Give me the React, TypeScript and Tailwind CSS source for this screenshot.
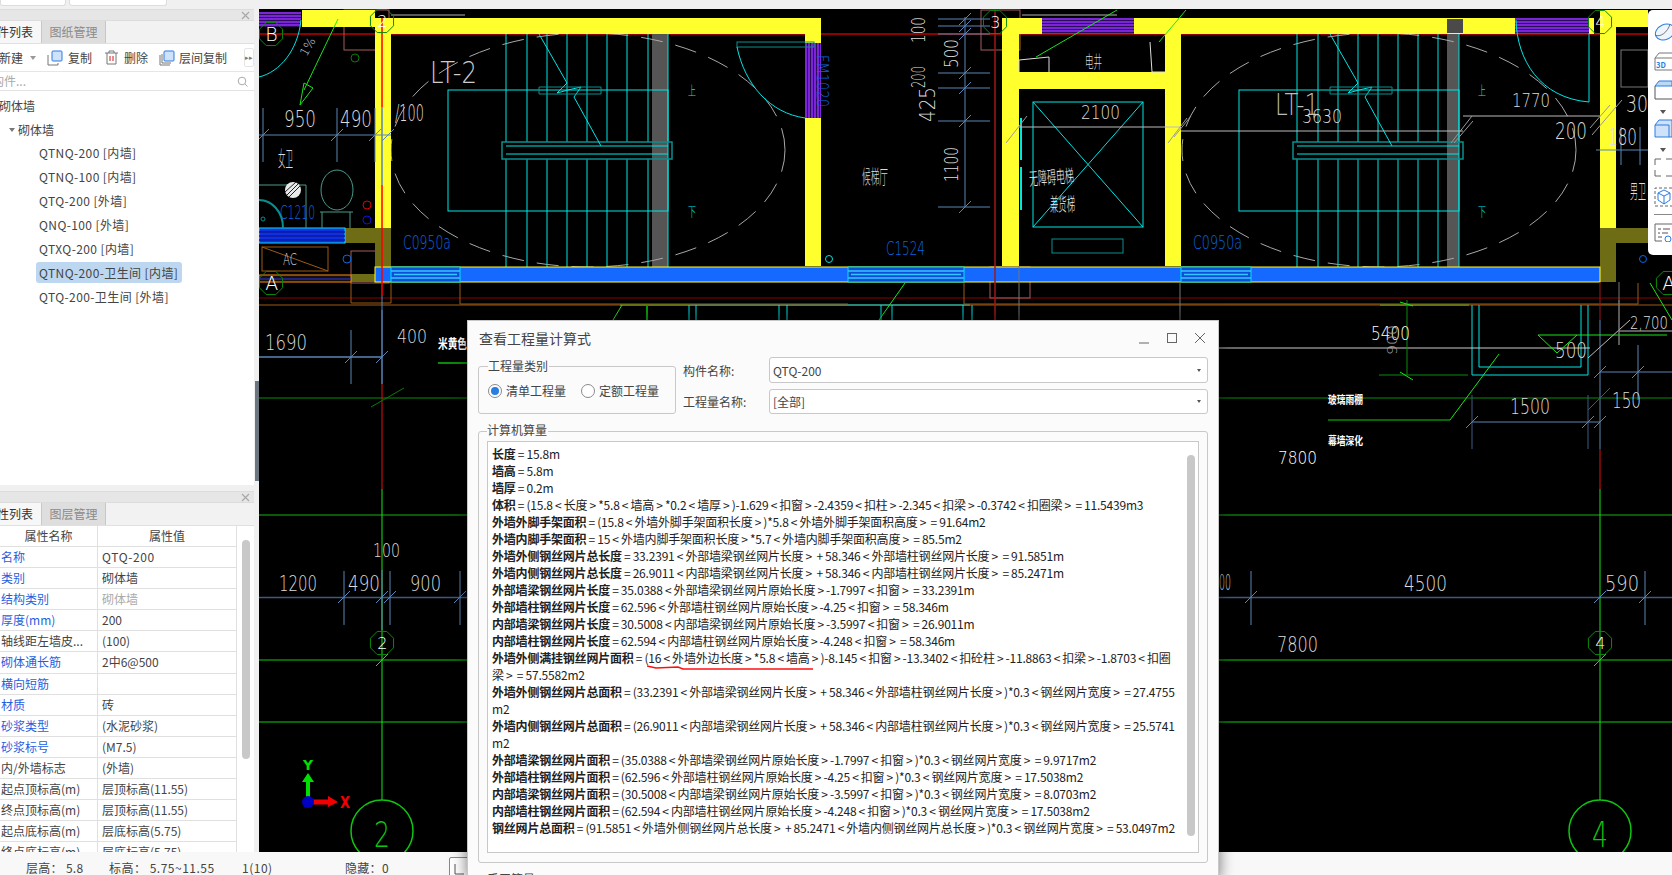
import type { ReactNode } from "react";

// ─── CAD canvas helpers (viewBox uses page coordinates) ──────────────────────

const CY = "#00e5e5";
const TEAL = "#0a8f8f";
const BLUE = "#0a66e0";
const DIM = "#5a86b8";
const DIM2 = "#3c5a80";
const GRN = "#0a8a0a";
const LIME = "#19e619";
const WALL = "#ffff2e";
const OLIVE = "#6e6c14";
const WBLUE = "#1569ff";
const PINK = "#a85a5a";
const BROWN = "#a05a14";

type TP = { x: number; y: number; w?: number; s?: number; c?: string; t: string; rot?: number; b?: boolean };

function T({ x, y, w, s = 20, c = "#dcdcdc", t, rot, b }: TP) {
  return (
    <text
      x={x}
      y={y}
      fontSize={s}
      fill={c}
      fontWeight={b ? 700 : 200}
      dominantBaseline="central"
      textLength={w}
      lengthAdjust={w ? "spacingAndGlyphs" : undefined}
      transform={rot ? `rotate(${rot} ${x} ${y})` : undefined}
    >
      {t}
    </text>
  );
}

function L({ d, c = DIM, w = 1 }: { d: string; c?: string; w?: number }) {
  return <path d={d} stroke={c} strokeWidth={w} fill="none" />;
}

function Bubble({ x, y, t, size = 16 }: { x: number; y: number; t: string; size?: number }) {
  const pts = Array.from({ length: 8 }, (_, i) => {
    const a = (Math.PI / 4) * i + Math.PI / 8;
    return `${x + 12.5 * Math.cos(a)},${y + 12.5 * Math.sin(a)}`;
  }).join(" ");
  return (
    <g>
      <polygon points={pts} fill="none" stroke={GRN} />
      <T x={x - size * 0.3} y={y} s={size} c="#fff" t={t} />
    </g>
  );
}

function Tick({ x, y, c = DIM }: { x: number; y: number; c?: string }) {
  return <L d={`M${x - 6} ${y + 6}L${x + 6} ${y - 6}`} c={c} />;
}

function Window({ x, w }: { x: number; w: number }) {
  return (
    <g>
      <rect x={x} y={267} width={w} height={15} fill="#0f4fd8" stroke={CY} />
      <L d={`M${x} 271H${x + w}M${x + 3} 274.500H${x + w - 3}M${x} 278H${x + w}`} c="#34c5ff" w={1.500} />
    </g>
  );
}

function Purple({ x, y, w, h, vertical }: { x: number; y: number; w: number; h: number; vertical?: boolean }) {
  const n = vertical ? Math.floor(w / 3) : Math.floor(h / 3);
  return (
    <g>
      <rect x={x} y={y} width={w} height={h} fill="#7c25d8" />
      {Array.from({ length: n }, (_, i) =>
        vertical ? (
          <rect key={i} x={x + i * 3 + 2} y={y} width={1} height={h} fill="#2c0e58" />
        ) : (
          <rect key={i} x={x} y={y + i * 3 + 2} width={w} height={1} fill="#2c0e58" />
        )
      )}
    </g>
  );
}

function Stair({ xs, left, cx, band, land }: { xs: number[]; left: number; cx: number; band: number; land: [number, number] }) {
  const right = xs[xs.length - 1];
  return (
    <g>
      <rect x={band} y={34} width={right - band} height={233} fill="#555" />
      <ellipse cx={cx} cy={150} rx={197} ry={117} fill="none" stroke="#a8a8a8" strokeDasharray="22 13" />
      <rect x={left} y={90} width={right - left} height={121} fill="none" stroke={CY} />
      {xs.map((x) => (
        <L key={x} d={`M${x} 34V142M${x} 159V267`} c={CY} />
      ))}
      <rect x={land[0]} y={142} width={land[1] - land[0]} height={17} fill="none" stroke={TEAL} strokeWidth={1.500} />
      <L d={`M${xs[0]} 146H${right}M${xs[0]} 154H${right}`} c={CY} />
    </g>
  );
}

// ─── The drawing ─────────────────────────────────────────────────────────────

function CadDrawing() {
  return (
    <svg
      width={1413}
      height={843}
      viewBox="259 9 1413 843"
      className="block font-['DejaVu_Sans','Noto_Sans_CJK_SC',sans-serif]"
    >
      <rect x={259} y={9} width={1413} height={843} fill="#000" />

      {/* long horizontals */}
      <L d="M259 34H1672" c="#c00000" w={1.500} />
      <L d="M259 298H1672" c="#8a0000" />
      <L d="M259 305H1672" c={BROWN} />
      <L d="M620 305H690" c={LIME} />
      <L d="M690 305H970" c={CY} />
      <L d="M1380 305H1469" c={LIME} />
      <L d="M259 398H1672" c={GRN} />
      <L d="M259 515H1672" c="#0a5a0a" w={2} />
      <L d="M259 660H1672" c={GRN} w={1.500} />
      <L d="M259 722H1672" c={GRN} w={1.500} />
      <L d="M259 597.500H1672" c={DIM2} w={1.500} />

      {/* brown and pink outlines */}
      <path d="M351 283V303H391V283M460 283V304H848M964 283V304H1638V283" stroke={BROWN} fill="none" />
      <rect x={344} y={10} width={45} height={40} fill="none" stroke={PINK} />
      <rect x={351} y={251} width={38} height={32} fill="none" stroke={PINK} />
      <rect x={981} y={10} width={39} height={40} fill="none" stroke={PINK} />
      <rect x={990} y={267} width={40} height={31} fill="none" stroke={PINK} />

      {/* stairs */}
      <Stair xs={[506, 527, 547, 567, 587, 607, 627, 648, 668]} left={448} cx={588} band={652} land={[502, 672]} />
      <Stair xs={[1297, 1318, 1338, 1358, 1378, 1398, 1418, 1438, 1459]} left={1239} cx={1379} band={1447} land={[1293, 1463]} />
      {[0, 791].map((dx) => (
        <g key={dx}>
          <L d={`M${539 + dx} 34L${567 + dx} 83L${557 + dx} 93L${568 + dx} 90L${581 + dx} 87L${574 + dx} 97L${601 + dx} 146`} c={CY} />
          <path d={`M${539 + dx} 87H${601 + dx}V94H${539 + dx}Z`} stroke={TEAL} fill="none" />
        </g>
      ))}

      {/* yellow walls */}
      <rect x={302} y={10} width={73} height={17} fill={WALL} />
      <rect x={391} y={18} width={430} height={16} fill={WALL} />
      <rect x={375} y={18} width={16} height={210} fill={WALL} />
      <rect x={805} y={34} width={16} height={232} fill={WALL} />
      <rect x={1002} y={18} width={592} height={16} fill={WALL} />
      <rect x={1002} y={18} width={17} height={248} fill={WALL} />
      <rect x={1165} y={34} width={16} height={232} fill={WALL} />
      <rect x={1019} y={72} width={146} height={17} fill={WALL} />
      <rect x={1600} y={10} width={48} height={17} fill={WALL} />
      <rect x={1600} y={27} width={16} height={201} fill={WALL} />
      <rect x={1447} y={19} width={16} height={14} fill="#4a4a4a" />

      {/* olive columns */}
      <path d="M345 228H391V267H375V243H345Z" fill={OLIVE} />
      <rect x={375} y={243} width={16} height={24} fill={OLIVE} />
      <path d="M1600 228H1648V243H1616V282H1600Z" fill={OLIVE} />
      <rect x={351} y={274} width={24} height={8} fill={OLIVE} />

      {/* blue wall */}
      <rect x={375} y={267} width={1225} height={15} fill={WBLUE} stroke={WALL} />
      <Window x={391} w={69} />
      <Window x={848} w={116} />
      <Window x={1181} w={70} />

      {/* windows and doors */}
      <Purple x={259} y={12} w={42} h={15} />
      <Purple x={1042} y={18} w={92} h={16} />
      <Purple x={1515} y={18} w={74} h={16} />
      <Purple x={805} y={43} w={16} h={75} vertical />
      <rect x={259} y={228} width={86} height={15} fill="#1030e0" stroke={CY} />
      <L d="M259 232H345M259 236H345M259 240H345" c="#0818a0" w={1.500} />

      {/* door arcs */}
      <rect x={737} y={42} width={77} height={5} fill="none" stroke={TEAL} />
      <L d="M737 47C745 85 770 113 805 118" c={CY} />
      <L d="M259 77C280 72 298 50 301 20" c={CY} />
      <L d="M1516 20C1517 60 1540 98 1589 102V33" c={CY} />

      {/* left bathroom */}
      <rect x={262} y={247} width={66} height={24} fill="none" stroke={BROWN} />
      <L d="M262 247L328 271" c={BROWN} />
      <rect x={259} y={275} width={92} height={7} fill="#1a1000" stroke="#ff8a10" />
      <L d="M259 279H351" c="#2030ff" />
      <ellipse cx={337} cy={190} rx={16} ry={20} fill="none" stroke="#4a9a8a" />
      <L d="M320 212H353M322 212V228M350 212V228" c="#4a9a8a" />
      <L d="M259 185H306V228" c="#4a9a8a" />
      <path d="M259 200C272 200 283 212 283 228" stroke={TEAL} fill="none" strokeWidth={2} />
      <circle cx={293} cy={190} r={8} fill="#e8e8e8" />
      <L d="M287 195L298 184M289 197L300 186M285 192L296 182" c="#222" />
      <circle cx={367} cy={205} r={4} fill="none" stroke="#e00000" />
      <circle cx={367} cy={220} r={4} fill="none" stroke="#1010e0" />
      <circle cx={355} cy={58} r={4} fill="none" stroke="#0a7a0a" />
      <circle cx={347} cy={259} r={4} fill="none" stroke={BLUE} />
      <circle cx={829} cy={259} r={3.500} fill="none" stroke={CY} />
      <circle cx={1643} cy={259} r={3.500} fill="none" stroke={BLUE} />
      <circle cx={263} cy={219} r={2} fill="none" stroke={TEAL} />
      <L d="M338 19L304 90M300 105L304 83L313 88Z" c={LIME} />

      {/* verticals */}
      <L d="M382 18V107M382 185V295" c="#ff0000" w={1.500} />
      <L d="M382 107V185" c={DIM} w={1.500} />
      <L d="M382 295V384" c={DIM} />
      <L d="M382 384V489" c="#e01010" />
      <L d="M382 489V800" c={LIME} />
      <L d="M382 570V630" c={DIM} />
      <L d="M995 9V320" c="#a01818" w={1.500} />
      <L d="M1600 282V320" c="#a01818" />
      <L d="M1600 320V449" c={DIM} />
      <L d="M1600 449V489" c="#e01010" />
      <L d="M1600 489V800" c={LIME} />
      <L d="M1019 266V320M1180 282V320M1619 282V345" c="#777" />
      <L d="M391 15H465M1022 15H1117" c="#777" w={1.500} />
      <L d="M689 305V320M696 305V320M779 305V320M787 305V320M881 305V320M892 305V320M963 305V320M972 305V320M1472 305V375M1479 305V367H1581V305M1588 305V375H1472" c={CY} />
      <L d="M613 320L622 305M879 320L905 283M1650 283L1672 320" c={LIME} />
      <L d="M647 305V320" c="#0a9a0a" w={2} />
      <L d="M1036 57L1117 10M1159 42L1186 10" c={LIME} />
      <L d="M1019 72V60L1049 57V72M1150 42L1152 72H1165" c="#ddd" />

      {/* elevator */}
      <rect x={1033} y={102} width={110} height={125} fill="none" stroke={CY} />
      <L d="M1033 102L1143 227M1143 102L1033 227" c={CY} />
      <rect x={1052} y={239} width={71} height={14} fill="none" stroke={TEAL} />
      <L d="M1021 118V160M1021 167V210" c={CY} w={2} />

      {/* dimensions top-left */}
      <L d="M259 135H391" c={DIM} />
      <L d="M263 108V162M337 108V162M375 108V162" c={DIM} />
      <Tick x={263} y={135} />
      <Tick x={337} y={135} />
      <Tick x={375} y={135} />
      <Tick x={388} y={135} />

      {/* dimensions around lift lobby */}
      <L d="M938 19H990M938 26H990M938 34H990M938 73H990M938 88H990M938 121H990M938 207H990" c={DIM} />
      <L d="M965 17V207" c={DIM} />
      {[19, 26, 34, 73, 88, 121, 207].map((y) => (
        <Tick key={y} x={965} y={y} />
      ))}
      <L d="M1019 127H1181M1181 131H1463M1463 116H1600" c="#bbb" />
      <L d="M1006 143L1027 116M1168 143L1187 118M1174 137L1191 116M1451 143L1472 116M1454 143L1473 121M1590 128L1610 105M1592 135L1622 100" c="#999" />
      <L d="M1596 150H1672" c={DIM} />
      <L d="M1621 127V165M1640 127V165" c={DIM} />
      <rect x={1621} y={50} width={27} height={37} fill="none" stroke="#777" />

      {/* lower left dims */}
      <L d="M259 357H382" c={DIM} w={1.500} />
      <L d="M351 330V384M382 310V384" c={DIM} />
      <Tick x={351} y={357} />
      <Tick x={382} y={357} />
      <L d="M438 363H467" c={GRN} w={2} />
      <L d="M371 407L404 388" c="#0a7a0a" />
      <L d="M344 571V625M390 571V625M460 571V625" c={DIM} />
      <Tick x={344} y={597} />
      <Tick x={382} y={597} />
      <Tick x={390} y={597} />
      <Tick x={460} y={597} />
      <Tick x={382} y={660} c={LIME} />
      <Bubble x={382} y={643} t="2" />

      {/* lower right */}
      <L d="M1219 348H1590" c="#ccc" />
      <L d="M1407 300V375M1379 375H1468" c={GRN} />
      <L d="M1400 302L1413 306M1400 372L1413 380" c={LIME} />
      <path d="M1538 335L1557 353L1577 335Z" stroke={LIME} fill="none" />
      <L d="M1577 335H1667" c={LIME} />
      <L d="M1588 358L1630 320M1619 331H1672" c="#bbb" />
      <L d="M1619 300V345" c="#777" />
      <L d="M1328 420H1450" c={GRN} w={1.500} />
      <L d="M1450 420L1499 354" c={LIME} />
      <L d="M1472 422H1600" c={DIM} />
      <L d="M1472 395V449M1588 395V449" c={DIM2} />
      <Tick x={1472} y={422} />
      <Tick x={1588} y={422} />
      <Tick x={1600} y={422} />
      <L d="M1588 410L1610 388" c={GRN} />
      <L d="M1600 372H1672M1638 345V400" c={DIM} />
      <Tick x={1600} y={372} />
      <Tick x={1638} y={372} />
      <L d="M1251 571V625M1645 571V625" c={DIM} />
      <Tick x={1251} y={597} />
      <Tick x={1600} y={597} />
      <Tick x={1645} y={597} />
      <Tick x={1600} y={660} c={LIME} />
      <Bubble x={1600} y={643} t="4" />

      {/* big axis circles */}
      <circle cx={382} cy={831} r={31} fill="none" stroke="#0fc60f" strokeWidth={1.500} />
      <circle cx={1600} cy={831} r={31} fill="none" stroke="#0fc60f" strokeWidth={1.500} />
      <T x={374} y={834} w={16} s={36} c="#0fc60f" t="2" />
      <T x={1592} y={834} w={16} s={36} c="#0fc60f" t="4" />

      {/* axis gizmo */}
      <path d="M306 802V782H302L308 773L314 782H310V802Z" fill="#00e000" />
      <path d="M308 799.500H328V796L338 802L328 807V804.500H308Z" fill="#f00000" />
      <circle cx={308} cy={802} r={6} fill="#0000c0" />
      <T x={303} y={765} w={10} s={14} c="#00e000" t="Y" b />
      <T x={340} y={802} w={10} s={16} c="#f00000" t="X" b />

      {/* grid bubbles top */}
      <Bubble x={271} y={34} t="B" size={19} />
      <Bubble x={271} y={283} t="A" size={19} />
      <Bubble x={382} y={21} t="2" />
      <Bubble x={995} y={22} t="3" />
      <Bubble x={1600} y={22} t="4" />
      <Bubble x={1668} y={283} t="A" size={19} />

      {/* labels */}
      <T x={284} y={119} w={32} s={23} t="950" />
      <T x={340} y={119} w={32} s={23} t="490" />
      <T x={395} y={113} w={29} s={23} t="/100" />
      <T x={430} y={72} w={47} s={30} c="#ccc" t="LT-2" />
      <T x={1275} y={104} w={44} s={30} c="#bbb" t="LT-1" />
      <T x={303} y={55} s={12} c="#ddd" t="1%" rot={-60} />
      <T x={278} y={159} w={15} s={21} t="女卫" />
      <T x={283} y={260} w={14} s={15} t="AC" />
      <T x={280} y={212} w={35} s={19} c={BLUE} t="C1210" />
      <T x={403} y={242} w={48} s={19} c={BLUE} t="C0950a" />
      <T x={1193} y={242} w={49} s={19} c={BLUE} t="C0950a" />
      <T x={886} y={248} w={39} s={19} c={BLUE} t="C1524" />
      <T x={822} y={55} w={52} s={16} c={BLUE} t="FM1020" rot={90} />
      <T x={688} y={90} w={8} s={13} c={CY} t="上" />
      <T x={688} y={211} w={8} s={13} c={CY} t="下" />
      <T x={1478} y={90} w={8} s={13} c={CY} t="上" />
      <T x={1478} y={211} w={8} s={13} c={CY} t="下" />
      <T x={1085} y={62} w={17} s={17} t="电井" />
      <T x={862} y={177} w={26} s={19} t="候梯厅" />
      <T x={1029} y={179} w={45} s={18} c="#eee" t="无障碍电梯" rot={-4} />
      <T x={1050} y={204} w={25} s={18} c="#eee" t="兼货梯" />
      <T x={1081} y={112} w={39} s={20} t="2100" />
      <T x={917.500} y={43} w={26} s={20} t="100" rot={-90} />
      <T x={917.500} y={88} w={22} s={20} t="200" rot={-90} />
      <T x={927} y={122} w={35} s={22} t="425" rot={-90} />
      <T x={950.500} y={68} w={29} s={20} t="500" rot={-90} />
      <T x={950.500} y={182} w={35} s={20} t="1100" rot={-90} />
      <T x={1302} y={116} w={40} s={20} t="3630" />
      <T x={1512} y={100} w={38} s={20} t="1770" />
      <T x={1555} y={131} w={32} s={23} t="200" />
      <T x={1608} y={137} w={29} s={23} t="180" />
      <T x={1626} y={104} w={22} s={23} t="30" />
      <T x={1630} y={192} w={16} s={20} t="男卫" />
      <T x={265} y={342} w={42} s={22} t="1690" />
      <T x={397} y={336} w={30} s={20} t="400" />
      <T x={438} y={343} w={29} s={13} c="#fff" t="米黄色" b />
      <T x={279} y={583} w={38} s={22} t="1200" />
      <T x={348} y={583} w={32} s={22} t="490" />
      <T x={410} y={583} w={31} s={22} t="900" />
      <T x={373} y={550} w={27} s={20} t="100" />
      <T x={1371} y={333} w={39} s={19} c="#fff" t="5400" />
      <T x={1392} y={355} w={30} s={14} c="#aaa" t="900" rot={-90} />
      <T x={1630} y={323} w={38} s={17} t="2,700" />
      <T x={1555} y={351} w={32} s={21} t="500" />
      <T x={1328} y={400} w={35} s={11} c="#fff" t="玻璃雨棚" b />
      <T x={1328} y={441} w={35} s={11} c="#fff" t="幕墙深化" b />
      <T x={1278} y={457} w={39} s={18} c="#fff" t="7800" />
      <T x={1510} y={407} w={40} s={21} t="1500" />
      <T x={1612} y={401} w={29} s={21} t="150" />
      <T x={1219} y={583} w={12} s={21} t="00" />
      <T x={1404} y={583} w={43} s={22} t="4500" />
      <T x={1605} y={583} w={34} s={22} t="590" />
      <T x={1277} y={645} w={41} s={21} t="7800" />
    </svg>
  );
}

// ─── Left panels ─────────────────────────────────────────────────────────────

const treeItems = [
  "QTNQ-200 [内墙]",
  "QTNQ-100 [内墙]",
  "QTQ-200 [外墙]",
  "QNQ-100 [外墙]",
  "QTXQ-200 [内墙]",
  "QTNQ-200-卫生间 [内墙]",
  "QTQ-200-卫生间 [外墙]",
];

const propRows: [string, string, boolean, boolean?][] = [
  ["名称", "QTQ-200", true],
  ["类别", "砌体墙", true],
  ["结构类别", "砌体墙", true, true],
  ["厚度(mm)", "200", true],
  ["轴线距左墙皮...", "(100)", false],
  ["砌体通长筋", "2中6@500", true],
  ["横向短筋", "", true],
  ["材质", "砖", true],
  ["砂浆类型", "(水泥砂浆)", true],
  ["砂浆标号", "(M7.5)", true],
  ["内/外墙标志", "(外墙)", false],
  ["起点顶标高(m)", "层顶标高(11.55)", false],
  ["终点顶标高(m)", "层顶标高(11.55)", false],
  ["起点底标高(m)", "层底标高(5.75)", false],
  ["终点底标高(m)", "层底标高(5.75)", false],
];

function PanelHead({ active, other }: { active: string; other: string }) {
  return (
    <>
      <div className="h-[12px] bg-[#e6e6e6] border-y border-[#dcdcdc] flex items-center justify-end pr-[4px] shrink-0">
        <svg width="9" height="9" viewBox="0 0 9 9">
          <path d="M1 1L8 8M8 1L1 8" stroke="#a8a8a8" strokeWidth="1.200" />
        </svg>
      </div>
      <div className="h-[23px] flex bg-[#f2f2f2] border-b border-[#e0e0e0] text-[12px] leading-[22px] shrink-0">
        <div className="w-[41px] overflow-hidden flex justify-end text-[#333] bg-[#f7f7f7] whitespace-nowrap pr-[8px]">
          {active}
        </div>
        <div className="w-[65px] bg-[#dedede] border-x border-[#c8c8c8] text-center text-[#8a8a8a]">{other}</div>
      </div>
    </>
  );
}

function CopyIcon({ stacked }: { stacked?: boolean }) {
  return (
    <svg width="16" height="16" viewBox="0 0 16 16">
      {stacked && <path d="M1 5V15H11" stroke="#777" fill="none" />}
      <path d={stacked ? "M3 4V13H12" : "M1 5V15H11V13"} stroke="#777" fill="none" />
      <rect x="5" y="1" width="10" height="10" rx="1" fill="#cfe2fa" stroke="#2a7de1" />
    </svg>
  );
}

function TrashIcon() {
  return (
    <svg width="13" height="15" viewBox="0 0 13 15">
      <path d="M0 3H13M4 3V1H9V3M2 3V14H11V3" stroke="#777" fill="none" />
      <path d="M5 6V11M8 6V11" stroke="#d01818" />
    </svg>
  );
}

function ListPanel() {
  return (
    <div className="h-[476px] bg-white flex flex-col overflow-hidden">
      <PanelHead active="构件列表" other="图纸管理" />
      <div className="h-[28px] flex items-center text-[12px] text-[#444] border-b border-[#e6e6e6] shrink-0 whitespace-nowrap">
        <span className="w-[26px] -ml-[1px] pt-[1px]">新建</span>
        <span className="ml-[6px] w-0 h-0 border-x-[3px] border-x-transparent border-t-[4px] border-t-[#999]" />
        <span className="ml-[11px]"><CopyIcon /></span>
        <span className="ml-[5px] pt-[1px]">复制</span>
        <span className="ml-[13px]"><TrashIcon /></span>
        <span className="ml-[6px] pt-[1px]">删除</span>
        <span className="ml-[11px]"><CopyIcon stacked /></span>
        <span className="ml-[4px] pt-[1px]">层间复制</span>
        <span className="ml-[17px] w-[10px] h-[19px] border border-[#e6e6e6] rounded-[2px] text-[7px] leading-[17px] text-center text-[#777]">
          ▸▸
        </span>
      </div>
      <div className="h-[19px] flex items-center justify-between border-b border-[#e2e2e2] text-[12px] text-[#aaa] pr-[6px] shrink-0">
        <span className="-ml-[8px]">构件...</span>
        <svg width="11" height="11" viewBox="0 0 11 11">
          <circle cx="5" cy="5" r="3.800" fill="none" stroke="#aaa" />
          <path d="M8 8L10.500 10.500" stroke="#aaa" />
        </svg>
      </div>
      <div className="pt-[3px] text-[12px] text-[#444] leading-[24px]">
        <div className="h-[24px] -ml-[1px] whitespace-nowrap">砌体墙</div>
        <div className="h-[23px] flex items-center">
          <span className="ml-[9px] w-0 h-0 border-x-[3.5px] border-x-transparent border-t-[4px] border-t-[#777]" />
          <span className="ml-[3px]">砌体墙</span>
        </div>
        {treeItems.map((t, i) => (
          <div key={t} className="h-[23.900px] flex items-center">
            <span className={`ml-[36px] pl-[3px] pr-[4px] h-[21px] leading-[21px] rounded-[3px] whitespace-nowrap tracking-[0.4px] ${i === 5 ? "bg-[#bdd7f0]" : ""}`}>
              {t}
            </span>
          </div>
        ))}
      </div>
    </div>
  );
}

function PropsPanel() {
  return (
    <div className="h-[361px] bg-white flex flex-col overflow-hidden mt-[6px]">
      <PanelHead active="属性列表" other="图层管理" />
      <div className="flex flex-1 min-h-0">
        <div className="flex-1 min-w-0 text-[12px]">
          <div className="flex h-[21px] leading-[20px] text-center text-[#444] border-b border-[#e0e0e0]">
            <div className="w-[98px] border-r border-[#e0e0e0]">属性名称</div>
            <div className="flex-1 border-r border-[#e0e0e0]">属性值</div>
          </div>
          {propRows.map(([k, v, blue, muted]) => (
            <div key={k} className="flex h-[21.100px] leading-[20px] border-b border-[#e0e0e0] whitespace-nowrap">
              <div className={`w-[98px] pl-[1px] border-r border-[#e0e0e0] ${blue ? "text-[#1f5fe0]" : "text-[#444]"}`}>{k}</div>
              <div className={`flex-1 pl-[4px] border-r border-[#e0e0e0] ${muted ? "text-[#aaa]" : "text-[#444]"} ${v.startsWith("QTQ") ? "tracking-[0.6px]" : ""}`}>{v}</div>
            </div>
          ))}
        </div>
        <div className="w-[17px] pt-[14px] pl-[5px] shrink-0">
          <div className="w-[8px] h-[219px] rounded-full bg-[#c8c8c8]" />
        </div>
      </div>
    </div>
  );
}

// ─── Dialog ──────────────────────────────────────────────────────────────────

const formulaLines: [string, string][] = [
  ["长度", "=15.8m"],
  ["墙高", "=5.8m"],
  ["墙厚", "=0.2m"],
  ["体积", "=(15.8<长度>*5.8<墙高>*0.2<墙厚>)-1.629<扣窗>-2.4359<扣柱>-2.345<扣梁>-0.3742<扣圈梁>=11.5439m3"],
  ["外墙外脚手架面积", "=(15.8<外墙外脚手架面积长度>)*5.8<外墙外脚手架面积高度>=91.64m2"],
  ["外墙内脚手架面积", "=15<外墙内脚手架面积长度>*5.7<外墙内脚手架面积高度>=85.5m2"],
  ["外墙外侧钢丝网片总长度", "=33.2391<外部墙梁钢丝网片长度>+58.346<外部墙柱钢丝网片长度>=91.5851m"],
  ["外墙内侧钢丝网片总长度", "=26.9011<内部墙梁钢丝网片长度>+58.346<内部墙柱钢丝网片长度>=85.2471m"],
  ["外部墙梁钢丝网片长度", "=35.0388<外部墙梁钢丝网片原始长度>-1.7997<扣窗>=33.2391m"],
  ["外部墙柱钢丝网片长度", "=62.596<外部墙柱钢丝网片原始长度>-4.25<扣窗>=58.346m"],
  ["内部墙梁钢丝网片长度", "=30.5008<内部墙梁钢丝网片原始长度>-3.5997<扣窗>=26.9011m"],
  ["内部墙柱钢丝网片长度", "=62.594<内部墙柱钢丝网片原始长度>-4.248<扣窗>=58.346m"],
  ["外墙外侧满挂钢丝网片面积", "=(16<外墙外边长度>*5.8<墙高>)-8.145<扣窗>-13.3402<扣砼柱>-11.8863<扣梁>-1.8703<扣圈"],
  ["", "梁>=57.5582m2"],
  ["外墙外侧钢丝网片总面积", "=(33.2391<外部墙梁钢丝网片长度>+58.346<外部墙柱钢丝网片长度>)*0.3<钢丝网片宽度>=27.4755"],
  ["", "m2"],
  ["外墙内侧钢丝网片总面积", "=(26.9011<内部墙梁钢丝网片长度>+58.346<内部墙柱钢丝网片长度>)*0.3<钢丝网片宽度>=25.5741"],
  ["", "m2"],
  ["外部墙梁钢丝网片面积", "=(35.0388<外部墙梁钢丝网片原始长度>-1.7997<扣窗>)*0.3<钢丝网片宽度>=9.9717m2"],
  ["外部墙柱钢丝网片面积", "=(62.596<外部墙柱钢丝网片原始长度>-4.25<扣窗>)*0.3<钢丝网片宽度>=17.5038m2"],
  ["内部墙梁钢丝网片面积", "=(30.5008<内部墙梁钢丝网片原始长度>-3.5997<扣窗>)*0.3<钢丝网片宽度>=8.0703m2"],
  ["内部墙柱钢丝网片面积", "=(62.594<内部墙柱钢丝网片原始长度>-4.248<扣窗>)*0.3<钢丝网片宽度>=17.5038m2"],
  ["钢丝网片总面积", "=(91.5851<外墙外侧钢丝网片总长度>+85.2471<外墙内侧钢丝网片总长度>)*0.3<钢丝网片宽度>=53.0497m2"],
];

// the symbols sit wide in the original font, so give them room
function Formula({ text }: { text: string }) {
  return (
    <>
      {text.split(/([<>=+])/).map((part, i) =>
        /^[<>=+]$/.test(part) ? (
          <span key={i} className="mx-[2.2px]">{part}</span>
        ) : (
          <span key={i}>{part}</span>
        )
      )}
    </>
  );
}

function Radio({ on, children }: { on?: boolean; children: ReactNode }) {
  return (
    <span className="flex items-center gap-[4px]">
      <span className="w-[14px] h-[14px] rounded-full border border-[#8a8a8a] bg-white flex items-center justify-center">
        {on && <span className="w-[8px] h-[8px] rounded-full bg-[#2a7de1]" />}
      </span>
      {children}
    </span>
  );
}

function SelectBox({ value, h }: { value: string; h: string }) {
  return (
    <div className={`w-[439px] ${h} bg-white border border-[#c8c8c8] rounded-[3px] flex items-center justify-between pl-[3px] pr-[6px]`}>
      <span className="pt-[1px]">{value}</span>
      <span className="w-0 h-0 border-x-[2.5px] border-x-transparent border-t-[3px] border-t-[#555]" />
    </div>
  );
}

function Dialog() {
  return (
    <div className="absolute left-[467px] top-[320px] w-[752px] h-[560px] bg-[#fbfbfb] border border-[#c8c8c8] shadow-[0_0_14px_rgba(0,0,0,0.55)] text-[12px] text-[#444] px-[10px]">
      <div className="h-[36px] flex items-center justify-between pb-[2px]">
        <span className="text-[14px] text-[#444] ml-[1px]">查看工程量计算式</span>
        <div className="flex items-center gap-[16px] mr-[2px]">
          <svg width="12" height="12" viewBox="0 0 12 12"><path d="M1 11H11" stroke="#666" /></svg>
          <svg width="12" height="12" viewBox="0 0 12 12"><rect x="1.500" y="1.500" width="9" height="9" fill="none" stroke="#666" /></svg>
          <svg width="12" height="12" viewBox="0 0 12 12"><path d="M1 1L11 11M11 1L1 11" stroke="#666" /></svg>
        </div>
      </div>

      <div className="flex">
        <div className="relative w-[198px] h-[48px] mt-[9px] border border-[#c8c8c8] rounded-[3px] flex gap-[15px] pl-[9px] pt-[15px] items-start">
          <span className="absolute left-[9px] -top-[9px] bg-[#fbfbfb] pr-[1px] leading-[16px]">工程量类别</span>
          <Radio on>清单工程量</Radio>
          <Radio>定额工程量</Radio>
        </div>
        <div className="ml-[7px] flex flex-col gap-[6px]">
          <div className="flex items-center">
            <span className="w-[86px] pt-[1px]">构件名称:</span>
            <SelectBox value="QTQ-200" h="h-[26px]" />
          </div>
          <div className="flex items-center">
            <span className="w-[86px] pt-[1px]">工程量名称:</span>
            <SelectBox value="[全部]" h="h-[25px]" />
          </div>
        </div>
      </div>

      <div className="relative w-[730px] h-[432px] mt-[17px] border border-[#c8c8c8] rounded-[3px] px-[8px] pt-[9px]">
        <span className="absolute left-[8px] -top-[10px] bg-[#fbfbfb] pr-[1px] leading-[16px]">计算机算量</span>
        <div className="relative h-[412px] bg-white border border-[#c8c8c8] pl-[4px] pt-[3px] text-[#222] leading-[17px] whitespace-nowrap overflow-hidden">
          {formulaLines.map(([b, r], i) => (
            <div key={i} className="h-[17px] tracking-[-0.2px]">
              {b && <b className="font-bold">{b}</b>}
              <Formula text={r} />
            </div>
          ))}
          <div className="absolute right-[3px] top-[13px] w-[8px] h-[381px] rounded-full bg-[#c8c8c8]" />
        </div>
      </div>

      <div className="mt-[8px] ml-[9px] leading-[16px]">手工算量</div>

      <svg className="absolute left-[179px] top-[342px]" width="170" height="10" viewBox="0 0 170 10">
        <path d="M0 3L9 5L31 4L36 6H166" stroke="#ff1010" strokeWidth="1.500" fill="none" />
      </svg>
    </div>
  );
}

// ─── Right toolbar ───────────────────────────────────────────────────────────

function RightToolbar() {
  return (
    <div className="absolute right-0 top-[10px] w-[24px] h-[245px] bg-white rounded-l-[5px] overflow-hidden flex flex-col items-start pl-[6px]">
      <svg className="mt-[13px] shrink-0" width="18" height="19" viewBox="0 0 18 19">
        <ellipse cx="11" cy="9" rx="10" ry="7.500" fill="#eef5fd" stroke="#2a7de1" transform="rotate(-25 11 9)" />
        <path d="M1 12C6 15 14 9 16 1" stroke="#777" fill="none" />
      </svg>
      <svg className="mt-[10px] shrink-0" width="18" height="19" viewBox="0 0 18 19">
        <path d="M1 6L5 1H18M1 6V18H18M1 6H18" stroke="#777" fill="none" />
        <text x="2" y="15.500" fontSize="7.500" fontWeight="700" fill="#2a7de1">3D</text>
      </svg>
      <svg className="mt-[9px] shrink-0" width="18" height="20" viewBox="0 0 18 20">
        <path d="M1 6L5 1H18V6Z" fill="#bcd8f7" stroke="#2a7de1" />
        <path d="M1 6V19H18" stroke="#555" fill="none" />
      </svg>
      <span className="ml-[6px] mt-[10px] w-0 h-0 border-x-[3.5px] border-x-transparent border-t-[4px] border-t-[#555]" />
      <svg className="mt-[5px] shrink-0" width="18" height="19" viewBox="0 0 18 19">
        <path d="M1 6L5 1H18V18H1Z" fill="#cfe2fa" stroke="#2a7de1" />
        <path d="M1 6H15V18" stroke="#2a7de1" fill="none" />
      </svg>
      <span className="ml-[6px] mt-[10px] w-0 h-0 border-x-[3.5px] border-x-transparent border-t-[4px] border-t-[#555]" />
      <svg className="mt-[6px] shrink-0" width="18" height="19" viewBox="0 0 18 19">
        <path d="M1 7V1H7M12 1H18M1 12V18H7M12 18H18" stroke="#666" fill="none" />
      </svg>
      <svg className="mt-[10px] shrink-0" width="18" height="20" viewBox="0 0 18 20">
        <path d="M18 1H1V19H18" stroke="#666" fill="none" strokeDasharray="3 2" />
        <path d="M4 6L10 3L16 6V13L10 17L4 13ZM4 6L10 9L16 6M10 9V17" stroke="#2a7de1" fill="none" />
      </svg>
      <div className="w-[18px] h-px bg-[#888] mt-[7px] shrink-0" />
      <svg className="mt-[8px] shrink-0" width="18" height="19" viewBox="0 0 18 19">
        <path d="M18 1H1V18H8" stroke="#666" fill="none" />
        <path d="M4 6H7M9 6H16M4 10H6M8 10H14M4 14H8" stroke="#555" fill="none" />
        <circle cx="14" cy="16" r="3" fill="none" stroke="#2a7de1" />
      </svg>
    </div>
  );
}

// ─── Page ────────────────────────────────────────────────────────────────────

export default function App() {
  return (
    <div className="relative w-[1672px] h-[875px] overflow-hidden bg-[#f0f0f0] flex flex-col font-['Noto_Sans_CJK_SC','Noto_Sans',sans-serif]">
      {/* top strip */}
      <div className="h-[9px] flex gap-[3px] shrink-0">
        <div className="w-[66px] h-[6px] bg-white rounded-b-[3px] border border-t-0 border-[#ddd]" />
        <div className="w-[98px] h-[6px] bg-white rounded-b-[3px] border border-t-0 border-[#ddd]" />
      </div>

      <div className="flex h-[843px] shrink-0">
        <div className="relative w-[259px] shrink-0 pr-[5px]">
          <ListPanel />
          <PropsPanel />
          <div className="absolute right-0 top-[372px] w-[4px] h-[100px] bg-[#6b7680]" />
        </div>
        <CadDrawing />
      </div>

      {/* status bar */}
      <div className="flex-1 bg-[#f8f8f8] flex items-center pt-[5px] text-[12px] text-[#444] whitespace-nowrap">
        <span className="ml-[26px] w-[56px] tracking-[0.3px]">层高： 5.8</span>
        <span className="ml-[27px] w-[104px] tracking-[0.5px]">标高： 5.75~11.55</span>
        <span className="ml-[29px] w-[28px] tracking-[0.5px]">1(10)</span>
        <span className="ml-[75px] w-[44px] tracking-[0.3px]">隐藏：0</span>
        <span className="ml-[60px] w-[20px] h-[22px] bg-white border border-[#888] rounded-[2px] flex items-end justify-center">
          <svg width="12" height="16" viewBox="0 0 12 16"><path d="M2 2V12H11" stroke="#555" fill="none" /></svg>
        </span>
      </div>

      <Dialog />
      <RightToolbar />
    </div>
  );
}
